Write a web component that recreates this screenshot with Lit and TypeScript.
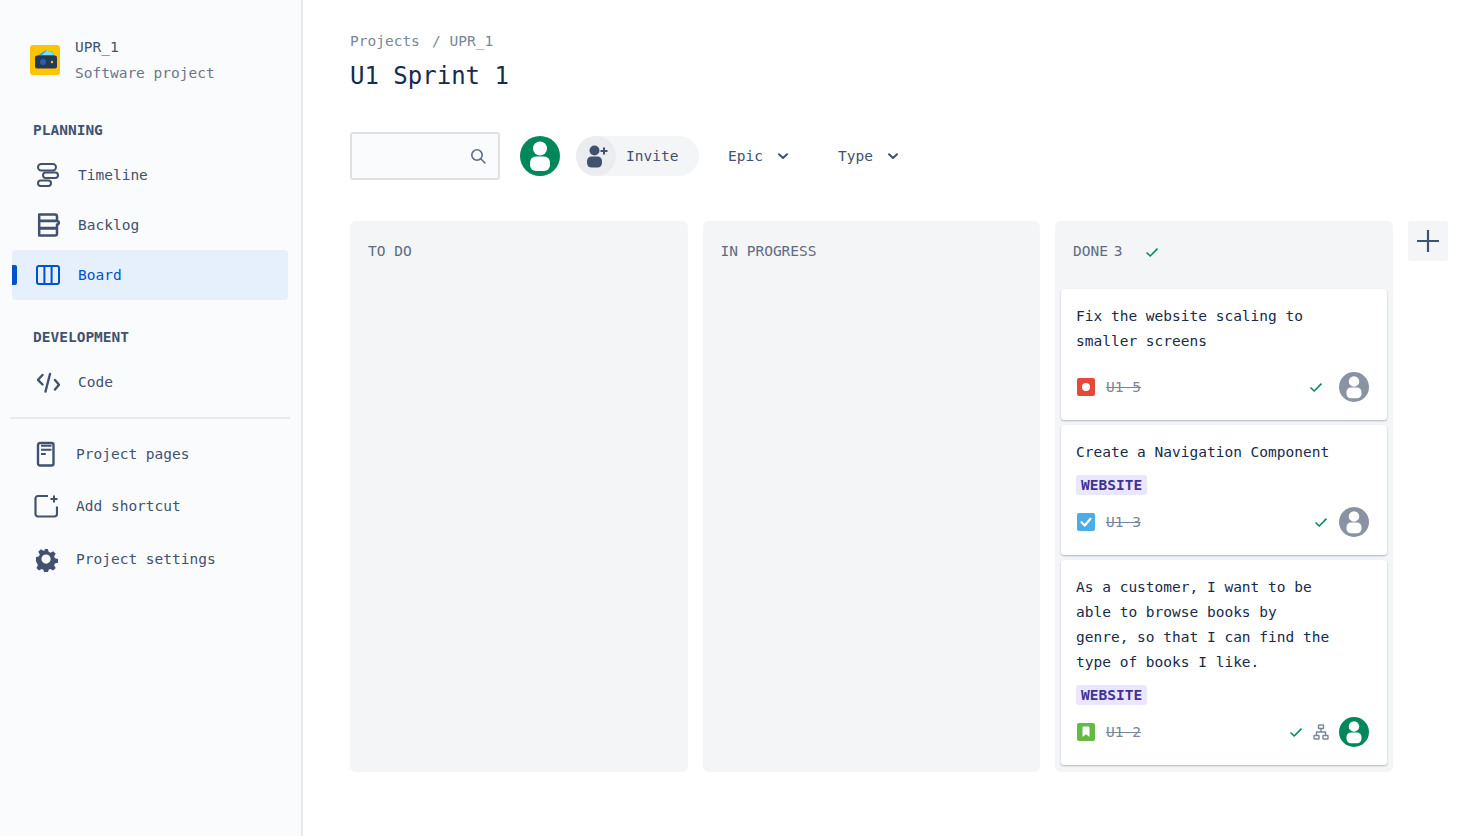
import { LitElement, html, css, svg } from 'lit';
import { customElement } from 'lit/decorators.js';

const personIcon = (size: number, color: string) => html`
  <svg width=${size} height=${size} viewBox="0 0 40 40">
    <circle cx="20" cy="20" r="20" fill=${color}></circle>
    <circle cx="20" cy="12.500" r="7" fill="#fff"></circle>
    <rect x="10" y="20.500" width="20" height="14.500" rx="6" fill="#fff"></rect>
  </svg>`;

const check = () => html`
  <svg class="check" width="14" height="14" viewBox="0 0 14 14">
    <path d="M1.5 7.5 5.2 11 12.5 3.6" fill="none" stroke="#00875a" stroke-width="1.5"></path>
  </svg>`;

const chevron = () => html`
  <svg width="12" height="12" viewBox="0 0 12 12">
    <path d="M2 4.2 6 8 10 4.2" fill="none" stroke="#42526e" stroke-width="2" stroke-linecap="round" stroke-linejoin="round"></path>
  </svg>`;

const navIcons: Record<string, unknown> = {
  timeline: svg`
    <rect x="2" y="2" width="18" height="6.500" rx="3.200"></rect>
    <rect x="7" y="10.500" width="15" height="5.500" rx="2.700"></rect>
    <rect x="2" y="18.500" width="13" height="5.500" rx="2.700"></rect>`,
  backlog: svg`
    <path d="M3.200 2.500H19a2 2 0 0 1 2 2V8.800H3.200zM3.200 9H21a1.800 1.800 0 0 1 0 3.600V16H3.200zM3.200 16.500H21V21.500a2 2 0 0 1-2 2H3.200z" stroke-width="2.500" stroke-linejoin="round"></path>`,
  board: svg`
    <rect x="1" y="4" width="22" height="18" rx="2"></rect>
    <path d="M8.400 4v18M15.600 4v18"></path>`,
  code: svg`
    <path d="M6.500 6 2 10.800l4.500 4.700M19 11l4 4.700-4 4.800M14 5 9.500 22.500" stroke-linecap="round" stroke-linejoin="round" stroke-width="2.400"></path>`,
  pages: svg`
    <rect x="4" y="2" width="15.500" height="22.500" rx="2" stroke-width="2.400"></rect>
    <path d="M7 4.800h10.500M7 8.800h10.500M7 13h4.800" stroke-width="2"></path>`,
  shortcut: svg`
    <path d="M14 3H4a2.500 2.500 0 0 0-2.500 2.500V21A2.500 2.500 0 0 0 4 23.500h16.500A2.500 2.500 0 0 0 23 21v-7.500" stroke-width="2.200"></path>
    <path d="M20 2.500v7M16.500 6h7" stroke-width="2"></path>`,
  settings: svg`<path transform="translate(1 2) scale(.92)" fill="#42526e" stroke="none" fill-rule="evenodd" d="M10 1h4l.8 3.200 2 .9 2.900-1.700 2.800 2.800-1.700 2.900.9 2 3.300.9v4l-3.300.8-.9 2 1.700 2.900-2.800 2.800-2.900-1.700-2 .9-.8 3.300h-4l-.8-3.300-2-.9-2.900 1.700-2.800-2.800 1.700-2.900-.9-2L1 14V10l3.300-.9.900-2-1.700-2.900 2.800-2.800 2.900 1.700 2-.9zM12 7a5 5 0 1 0 0 10 5 5 0 0 0 0-10z"></path>`,
};

@customElement('app-root')
export class AppRoot extends LitElement {
  static styles = css`
    :host {
      display: flex;
      width: 1468px;
      height: 836px;
      overflow: hidden;
      background: #fff;
      font-family: "DejaVu Sans Mono", "Liberation Mono", monospace;
      font-size: 14.500px;
      color: #172b4d;
    }
    svg { display: block; flex: none; }

    .sidebar {
      flex: none;
      box-sizing: border-box;
      background: #fafbfd;
      border-right: 2px solid #e8e9ec;
      width: 303px;
      padding: 34px 13px 0 12px;
    }
    .project {
      display: flex;
      align-items: center;
      gap: 15px;
      padding-left: 18px;
      height: 52px;
    }
    .project .name { line-height: 26px; color: #42526e; }
    .project .kind { line-height: 26px; color: #6b778c; }
    .heading {
      line-height: 20px;
      margin: 34px 0 0 21px;
      height: 20px;
      font-weight: 700;
      color: #42526e;
    }
    .heading + .group { margin-top: 10px; }
    .heading.second { margin-top: 27px; }
    .item {
      position: relative;
      display: flex;
      align-items: center;
      height: 50px;
      padding-left: 24px;
      gap: 18px;
      color: #42526e;
      border-radius: 4px;
    }
    .item svg { fill: none; stroke: #42526e; stroke-width: 2; }
    .item.active { background: #e6effc; color: #0052cc; }
    .item.active svg { stroke: #0052cc; }
    .item.active::before {
      content: "";
      position: absolute;
      left: 0;
      top: 15px;
      width: 5px;
      height: 20px;
      background: #0052cc;
      border-radius: 0 2px 2px 0;
    }
    .divider {
      height: 2px;
      background: #e8e9ec;
      margin: 10px -2px 8.700px -2px;
    }
    .group.extra .item { height: 52.500px; padding-left: 22px; }

    .main {
      flex: 1;
      min-width: 0;
      padding: 31px 20px 0 47px;
    }
    .crumbs {
      display: flex;
      gap: 8.760px;
      line-height: 20px;
      color: #7a869a;
      white-space: pre;
    }
    .crumbs .slash { margin-left: 3.500px; }
    h1 {
      margin: 9px 0 0;
      font-size: 24px;
      line-height: 32px;
      font-weight: 400;
      color: #172b4d;
    }
    .toolbar {
      display: flex;
      align-items: center;
      height: 48px;
      margin-top: 40px;
    }
    .search {
      width: 150px;
      height: 48px;
      box-sizing: border-box;
      display: flex;
      align-items: center;
      justify-content: flex-end;
      padding-right: 11px;
      border: 2px solid #dfe1e6;
      border-radius: 3px;
      background: #fafbfc;
      margin-right: 20px;
    }
    .invite {
      display: flex;
      align-items: center;
      width: 123px;
      height: 40px;
      margin-left: 16px;
      border-radius: 20px;
      background: #f4f5f7;
      color: #42526e;
    }
    .invite .bubble {
      display: flex;
      align-items: center;
      justify-content: center;
      width: 40px;
      height: 40px;
      margin-right: 10px;
      border-radius: 50%;
      background: #ebecf0;
    }
    .filter {
      display: flex;
      align-items: center;
      gap: 14px;
      width: 110px;
      color: #42526e;
    }
    .invite + .filter { margin-left: 29px; }

    .board {
      display: flex;
      align-items: flex-start;
      gap: 15px;
      margin-top: 41px;
    }
    .column {
      width: 337.500px;
      height: 551px;
      box-sizing: border-box;
      flex: none;
      background: #f4f5f7;
      border-radius: 6px;
      padding: 0 6px;
    }
    .column header {
      display: flex;
      align-items: center;
      height: 60px;
      padding: 0 12px;
      color: #5e6c84;
    }
    .column header .count { word-spacing: -3px; }
    .column header .check { margin-left: 23px; margin-top: 1px; }
    .cards {
      display: flex;
      flex-direction: column;
      gap: 5px;
      margin-top: 8px;
    }
    .card {
      box-sizing: border-box;
      background: #fff;
      border-radius: 3px;
      box-shadow: 0 1px 2px rgba(9, 30, 66, 0.3);
      padding: 15px 18px 15px 16px;
    }
    .card.bug { height: 131px; }
    .card.task { height: 130px; }
    .card.story { height: 205px; }
    .summary {
      max-width: 258px;
      line-height: 25px;
      margin-left: -1px;
      color: #172b4d;
    }
    .tag {
      display: inline-block;
      height: 20px;
      line-height: 20px;
      padding: 0 5px;
      margin-top: 10px;
      border-radius: 3px;
      background: #eae6ff;
      color: #403294;
      font-weight: 700;
      vertical-align: top;
    }
    .tag-row { height: 31px; margin-left: -1px; }
    .meta {
      display: flex;
      align-items: center;
      height: 30px;
      margin-top: 18px;
    }
    .tag-row + .meta { margin-top: 11px; }
    .key {
      margin-left: 11px;
      color: #7a869a;
      text-decoration: line-through;
    }
    .meta .spacer { flex: 1; }
    .meta .check { margin-right: 16px; }
    .task .meta .check { margin-right: 11px; }
    .story .meta .check { margin-right: 10px; }
    .meta .tree { margin-right: 10px; }
    .add {
      width: 40px;
      height: 40px;
      flex: none;
      display: flex;
      align-items: center;
      justify-content: center;
      background: #f4f5f7;
      border: 0;
      padding: 0;
      border-radius: 3px;
    }
  `;

  private nav(icon: string, label: string, active = false) {
    return html`
      <div class="item ${active ? 'active' : ''}">
        <svg width="24" height="26" viewBox="0 0 24 26">${navIcons[icon]}</svg>
        <span>${label}</span>
      </div>`;
  }

  private typeIcon(kind: string) {
    if (kind === 'bug') {
      return html`<svg width="18" height="18" viewBox="0 0 18 18"><rect width="18" height="18" rx="2" fill="#e5493a"></rect><circle cx="9" cy="9" r="4" fill="#fff"></circle></svg>`;
    }
    if (kind === 'task') {
      return html`<svg width="18" height="18" viewBox="0 0 18 18"><rect width="18" height="18" rx="2" fill="#4bade8"></rect><path d="M4.500 9.200 7.800 12.500 13.500 5.800" fill="none" stroke="#fff" stroke-width="2.200" stroke-linecap="round" stroke-linejoin="round"></path></svg>`;
    }
    return html`<svg width="18" height="18" viewBox="0 0 18 18"><rect width="18" height="18" rx="2" fill="#65ba43"></rect><path d="M5.500 4.500a1 1 0 0 1 1-1h5a1 1 0 0 1 1 1v9.500L9 11.300 5.500 14z" fill="#fff"></path></svg>`;
  }

  render() {
    return html`
      <aside class="sidebar">
        <div class="project">
          <svg width="30" height="30" viewBox="0 0 30 30">
            <rect width="30" height="30" rx="3" fill="#ffc400"></rect>
            <path d="M7 11 16 5l3 2 3-1 2 5z" fill="#2aa7d8"></path>
            <path d="M12 10l5-5 2 2 3-.5 1 3.500z" fill="#79e2f2"></path>
            <rect x="5" y="10.500" width="22" height="13" rx="2" fill="#253858"></rect>
            <circle cx="13" cy="17" r="3" fill="#2a5ea8"></circle>
            <circle cx="22" cy="17" r="1.200" fill="#ffc400"></circle>
          </svg>
          <div>
            <div class="name">UPR_1</div>
            <div class="kind">Software project</div>
          </div>
        </div>
        <div class="heading">PLANNING</div>
        <div class="group">
          ${this.nav('timeline', 'Timeline')}
          ${this.nav('backlog', 'Backlog')}
          ${this.nav('board', 'Board', true)}
        </div>
        <div class="heading second">DEVELOPMENT</div>
        <div class="group">${this.nav('code', 'Code')}</div>
        <div class="divider"></div>
        <div class="group extra">
          ${this.nav('pages', 'Project pages')}
          ${this.nav('shortcut', 'Add shortcut')}
          ${this.nav('settings', 'Project settings')}
        </div>
      </aside>
      <main class="main">
        <div class="crumbs"><span>Projects</span><span class="slash">/</span><span>UPR_1</span></div>
        <h1>U1 Sprint 1</h1>
        <div class="toolbar">
          <div class="search">
            <svg width="18" height="18" viewBox="0 0 18 18">
              <circle cx="8" cy="8" r="5.200" fill="none" stroke="#5e6c84" stroke-width="1.600"></circle>
              <path d="M12 12l4 4" stroke="#5e6c84" stroke-width="1.600" stroke-linecap="round"></path>
            </svg>
          </div>
          ${personIcon(40, '#00875a')}
          <div class="invite">
            <div class="bubble">
              <svg width="24" height="24" viewBox="0 0 24 24">
                <circle cx="10.500" cy="6.500" r="5" fill="#42526e"></circle>
                <rect x="3" y="12.500" width="15" height="11" rx="4.500" fill="#42526e"></rect>
                <path d="M20 3.500v7M16.500 7h7" stroke="#42526e" stroke-width="2"></path>
              </svg>
            </div>
            <span>Invite</span>
          </div>
          <div class="filter"><span>Epic</span>${chevron()}</div>
          <div class="filter"><span>Type</span>${chevron()}</div>
        </div>
        <div class="board">
          <section class="column"><header>TO DO</header></section>
          <section class="column"><header>IN PROGRESS</header></section>
          <section class="column">
            <header><span class="count">DONE 3</span>${check()}</header>
            <div class="cards">
              <article class="card bug">
                <div class="summary">Fix the website scaling to smaller screens</div>
                <div class="meta">
                  ${this.typeIcon('bug')}<span class="key">U1-5</span><span class="spacer"></span>
                  ${check()}${personIcon(30, '#8993a4')}
                </div>
              </article>
              <article class="card task">
                <div class="summary">Create a Navigation Component</div>
                <div class="tag-row"><span class="tag">WEBSITE</span></div>
                <div class="meta">
                  ${this.typeIcon('task')}<span class="key">U1-3</span><span class="spacer"></span>
                  ${check()}${personIcon(30, '#8993a4')}
                </div>
              </article>
              <article class="card story">
                <div class="summary">As a customer, I want to be able to browse books by genre, so that I can find the type of books I like.</div>
                <div class="tag-row"><span class="tag">WEBSITE</span></div>
                <div class="meta">
                  ${this.typeIcon('story')}<span class="key">U1-2</span><span class="spacer"></span>
                  ${check()}
                  <svg class="tree" width="16" height="16" viewBox="0 0 16 16" fill="none" stroke="#7a869a" stroke-width="1.400">
                    <rect x="5.500" y="1" width="5" height="3.500" rx=".5"></rect>
                    <rect x="1" y="11.500" width="5" height="3.500" rx=".5"></rect>
                    <rect x="10" y="11.500" width="5" height="3.500" rx=".5"></rect>
                    <path d="M8 4.500V8M3.500 11.500V8h9v3.500"></path>
                  </svg>
                  ${personIcon(30, '#00875a')}
                </div>
              </article>
            </div>
          </section>
          <button class="add">
            <svg width="24" height="24" viewBox="0 0 24 24"><path d="M12 1v22M1 12h22" stroke="#42526e" stroke-width="2.200"></path></svg>
          </button>
        </div>
      </main>
    `;
  }
}
